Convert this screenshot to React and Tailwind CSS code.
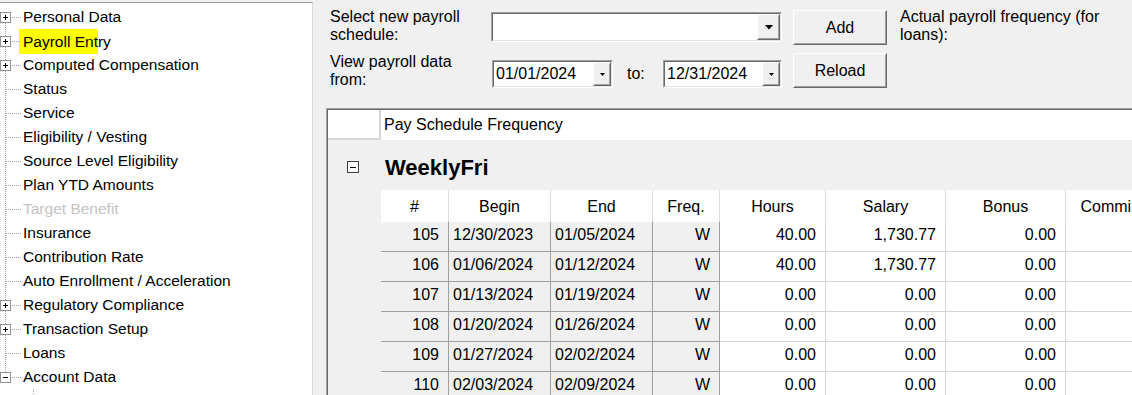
import React from "react";

const treeItems = [
  { t: "Personal Data", box: "plus", first: true },
  { t: "Payroll Entry", box: "plus", hl: true },
  { t: "Computed Compensation", box: "plus" },
  { t: "Status" },
  { t: "Service" },
  { t: "Eligibility / Vesting" },
  { t: "Source Level Eligibility" },
  { t: "Plan YTD Amounts" },
  { t: "Target Benefit", dim: true },
  { t: "Insurance" },
  { t: "Contribution Rate" },
  { t: "Auto Enrollment / Acceleration" },
  { t: "Regulatory Compliance", box: "plus" },
  { t: "Transaction Setup", box: "plus" },
  { t: "Loans" },
  { t: "Account Data", box: "minus", last: true },
];

function Box({ x, type }) {
  return (
    <g>
      <rect x={x + 0.5} y={7.5} width={10} height={10} fill="#fff" stroke="#919191" />
      <rect x={x + 3} y={12} width={5} height={1} fill="#000" />
      {type === "plus" && <rect x={x + 5} y={10} width={1} height={5} fill="#000" />}
    </g>
  );
}

function Connector({ item }) {
  const vTop = item.first ? 12 : 0;
  const vBot = item.last ? 12 : 24;
  return (
    <svg width="22" height="24" className="shrink-0" shapeRendering="crispEdges">
      <line x1="5.5" y1={vTop} x2="5.5" y2={vBot} stroke="#a0a0a0" strokeDasharray="1 1" />
      <line x1={item.box ? 12 : 6} y1="12.5" x2="21" y2="12.5" stroke="#a0a0a0" strokeDasharray="1 1" />
      {item.box && <Box x={0} type={item.box} />}
    </svg>
  );
}

function Tree() {
  return (
    <div className="pt-[2px]">
      {treeItems.map((it) => (
        <div key={it.t} className="flex h-[24px] items-center">
          <Connector item={it} />
          <span className={`ml-[1px] whitespace-nowrap text-[15.5px] leading-[24px] ${it.dim ? "text-[#c4c4c4]" : "text-black"}`}>
            {it.hl ? (
              <>
                <span className="-ml-[4px] inline-block bg-[#ffff00] pl-[4px] leading-[25px]">Payroll Ent</span>
                ry
              </>
            ) : (
              it.t
            )}
          </span>
        </div>
      ))}
      <div className="flex h-[24px] items-center">
        <svg width="50" height="24" className="shrink-0" shapeRendering="crispEdges">
          <line x1="33.5" y1="0" x2="33.5" y2="24" stroke="#a0a0a0" strokeDasharray="1 1" />
          <line x1="40" y1="12.5" x2="49" y2="12.5" stroke="#a0a0a0" strokeDasharray="1 1" />
          <Box x={28} type="plus" />
        </svg>
        <span className="ml-[1px] whitespace-nowrap text-[15.5px]">General Mappings</span>
      </div>
    </div>
  );
}

const raisedOuter = "border border-t-white border-l-white border-r-[#696969] border-b-[#696969]";
const raisedInner = "border border-t-[#f0f0f0] border-l-[#f0f0f0] border-r-[#a0a0a0] border-b-[#a0a0a0]";
const sunkOuter = "border border-t-[#a0a0a0] border-l-[#a0a0a0] border-r-white border-b-white";
const sunkInner = "border border-t-[#696969] border-l-[#696969] border-r-[#e3e3e3] border-b-[#e3e3e3]";

function Button({ children, className }) {
  return (
    <div className={`h-[35px] w-[94px] bg-[#f0f0f0] ${raisedOuter} ${className}`}>
      <div className={`flex h-full w-full items-center justify-center ${raisedInner}`}>
        <span className="text-[16px]">{children}</span>
      </div>
    </div>
  );
}

function SmallRaised({ w, children }) {
  return (
    <div className={`h-full shrink-0 bg-[#f0f0f0] ${raisedOuter}`} style={{ width: w }}>
      <div className={`flex h-full w-full items-center justify-center ${raisedInner}`}>{children}</div>
    </div>
  );
}

function Combo() {
  return (
    <div className={`mt-[12px] h-[30px] w-[291px] ${sunkOuter}`}>
      <div className={`flex h-full w-full justify-end bg-white ${sunkInner}`}>
        <SmallRaised w={23}>
          <svg width="8" height="5">
            <path d="M0 0H8L4 4.5Z" fill="#000" />
          </svg>
        </SmallRaised>
      </div>
    </div>
  );
}

function DatePicker({ value, w }) {
  return (
    <div className={`mt-[12px] h-[28px] ${sunkOuter}`} style={{ width: w }}>
      <div className={`flex h-full w-full items-center bg-white ${sunkInner}`}>
        <span className="flex-1 pl-[2px] text-[16px] leading-none">{value}</span>
        <SmallRaised w={18}>
          <svg width="5" height="3">
            <path d="M0 0H5L2.5 3Z" fill="#000" />
          </svg>
        </SmallRaised>
      </div>
    </div>
  );
}

const cols = [
  { h: "#", w: 68, align: "right" },
  { h: "Begin", w: 102, align: "left" },
  { h: "End", w: 102, align: "left" },
  { h: "Freq.", w: 67, align: "right" },
  { h: "Hours", w: 106, align: "right", white: true },
  { h: "Salary", w: 120, align: "right", white: true },
  { h: "Bonus", w: 120, align: "right", white: true },
  { h: "Commission", w: 118, align: "right", white: true },
];

const rows = [
  ["105", "12/30/2023", "01/05/2024", "W", "40.00", "1,730.77", "0.00", ""],
  ["106", "01/06/2024", "01/12/2024", "W", "40.00", "1,730.77", "0.00", ""],
  ["107", "01/13/2024", "01/19/2024", "W", "0.00", "0.00", "0.00", ""],
  ["108", "01/20/2024", "01/26/2024", "W", "0.00", "0.00", "0.00", ""],
  ["109", "01/27/2024", "02/02/2024", "W", "0.00", "0.00", "0.00", ""],
  ["110", "02/03/2024", "02/09/2024", "W", "0.00", "0.00", "0.00", ""],
];

function Grid() {
  return (
    <div className="ml-[13px] flex-1 border-t border-l border-[#a0a0a0]">
      <div className="h-full border-t border-l border-[#696969] bg-[#f0f0f0]">
        {/* Row A */}
        <div className="flex h-[30px]">
          <div className="w-[53px] shrink-0 border-r-2 border-b-2 border-[#d6d6d6] bg-white" />
          <div className="flex flex-1 items-center bg-white pl-[3px] text-[16px] whitespace-nowrap">Pay Schedule Frequency</div>
        </div>
        {/* Row B band */}
        <div className="flex h-[50px]">
          <div className="flex w-[53px] shrink-0 items-center pl-[19px] pt-[3px]">
            <svg width="12" height="12" shapeRendering="crispEdges">
              <rect x="0.5" y="0.5" width="11" height="11" fill="#fff" stroke="#3c3c3c" />
              <rect x="3" y="6" width="6" height="1" fill="#000" />
            </svg>
          </div>
          <div className="flex flex-1 items-center pl-[4px] pt-[4px] text-[22px] font-bold whitespace-nowrap">WeeklyFri</div>
        </div>
        {/* Sub grid */}
        <div className="flex">
          <div className="w-[53px] shrink-0" />
          <div className="flex flex-col">
            <div className="flex h-[32px] bg-white">
              {cols.map((c) => (
                <div
                  key={c.h}
                  className="flex shrink-0 items-center justify-center border-r border-[#dcdcdc] pt-[2px] text-[16px] whitespace-nowrap"
                  style={{ width: c.w }}
                >
                  {c.h}
                </div>
              ))}
            </div>
            {rows.map((r) => (
              <div key={r[0]} className="flex h-[30px]">
                {r.map((v, i) => {
                  const c = cols[i];
                  return (
                    <div
                      key={i}
                      className={`flex shrink-0 items-center border-r border-b pb-[3px] text-[16px] whitespace-nowrap ${
                        c.white ? "border-[#d4d4d4] bg-white" : "border-[#a0a0a0] bg-[#f0f0f0]"
                      } ${c.align === "right" ? "justify-end pr-[9px]" : "justify-start pl-[4px]"}`}
                      style={{ width: c.w }}
                    >
                      {v}
                    </div>
                  );
                })}
              </div>
            ))}
          </div>
        </div>
      </div>
    </div>
  );
}

export default function App() {
  return (
    <div className="flex h-[395px] w-[1132px] overflow-hidden bg-[#f0f0f0] font-['Liberation_Sans',Arial,sans-serif] text-black">
      <div className="mt-[2px] w-[313px] shrink-0 overflow-hidden border-t border-r border-t-[#a0a0a0] border-r-[#d9d9d9] bg-white">
        <Tree />
      </div>
      <div className="flex min-w-0 flex-1 flex-col overflow-hidden">
        {/* Row 1 */}
        <div className="flex h-[48px] shrink-0 items-start pl-[17px]">
          <div className="mt-[8px] w-[161px] shrink-0 text-[16px] leading-[18px]">
            Select new payroll
            <br />
            schedule:
          </div>
          <Combo />
          <Button className="mt-[10px] ml-[11px]">Add</Button>
          <div className="mt-[8px] ml-[13px] text-[16px] leading-[18px] whitespace-nowrap">
            Actual payroll frequency (for
            <br />
            loans):
          </div>
        </div>
        {/* Row 2 */}
        <div className="flex h-[60px] shrink-0 items-start pl-[17px]">
          <div className="mt-[5px] w-[162px] shrink-0 text-[16px] leading-[18px]">
            View payroll data
            <br />
            from:
          </div>
          <DatePicker value="01/01/2024" w={121} />
          <div className="mt-[17px] ml-[14px] w-[36px] shrink-0 text-[16px] leading-[18px]">to:</div>
          <DatePicker value="12/31/2024" w={119} />
          <Button className="mt-[5px] ml-[11px]">Reload</Button>
        </div>
        <Grid />
      </div>
    </div>
  );
}
